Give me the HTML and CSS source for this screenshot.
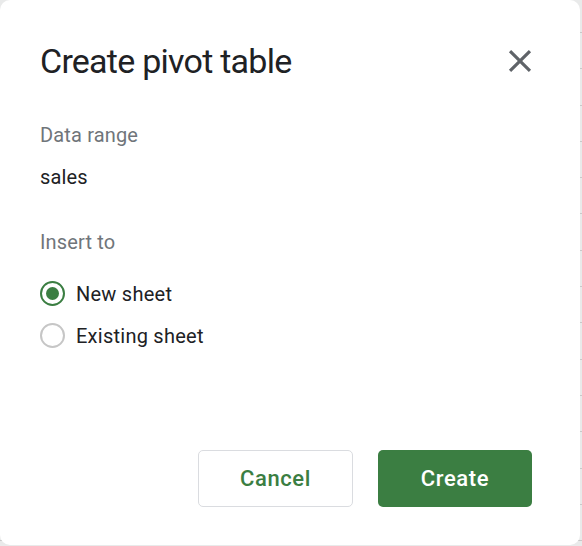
FILE: index.html
```html
<!DOCTYPE html>
<html>
<head>
<meta charset="utf-8">
<link rel="stylesheet" href="styles.css">
</head>
<body>
<div class="dialog">
  <div class="header">
    <h1 class="title">Create pivot table</h1>
    <button class="close" aria-label="Close">
      <svg width="38" height="38" viewBox="0 0 24 24"><path fill="#5f6368" d="M19 6.41L17.59 5 12 10.59 6.41 5 5 6.41 10.59 12 5 17.59 6.41 19 12 13.41 17.59 19 19 17.59 13.41 12z"/></svg>
    </button>
  </div>
  <div class="label first">Data range</div>
  <div class="value">sales</div>
  <div class="label second">Insert to</div>
  <div class="options">
    <label class="option"><span class="radio checked"></span><span>New sheet</span></label>
    <label class="option"><span class="radio"></span><span>Existing sheet</span></label>
  </div>
  <div class="actions">
    <button class="btn cancel">Cancel</button>
    <button class="btn create">Create</button>
  </div>
</div>
</body>
</html>
```
FILE: styles.css
```css
html, body {
  margin: 0;
  padding: 0;
}
body {
  width: 582px;
  height: 546px;
  background-color: #e9eaea;
  background-image: repeating-linear-gradient(to bottom, transparent 0, transparent 32px, #c9c9c9 32px, #c9c9c9 33px, transparent 33px, transparent 36.3px);
  font-family: Roboto, "Liberation Sans", sans-serif;
  overflow: hidden;
}
.dialog {
  box-sizing: border-box;
  width: 580px;
  height: 545px;
  background: #fff;
  border-radius: 10px;
  padding: 41px 48px 38px 40px;
  display: flex;
  flex-direction: column;
}
.header {
  display: flex;
  align-items: center;
  justify-content: space-between;
  height: 40px;
}
.title {
  margin: 0;
  font-size: 34px;
  line-height: 40px;
  font-weight: 400;
  color: #202124;
  letter-spacing: -0.75px;
}
.close {
  border: 0;
  background: none;
  padding: 0;
  width: 38px;
  height: 38px;
  margin-right: -7px;
  display: flex;
}
.label {
  font-size: 20px;
  line-height: 24px;
  color: #70757a;
  letter-spacing: 0.15px;
}
.label.first { margin-top: 42px; }
.label.second { margin-top: 41px; }
.value {
  margin-top: 18px;
  font-size: 20px;
  line-height: 24px;
  color: #202124;
  letter-spacing: 0.15px;
}
.options {
  margin-top: 27px;
  display: flex;
  flex-direction: column;
  gap: 17px;
}
.option {
  display: flex;
  align-items: center;
  gap: 11px;
  height: 25px;
  font-size: 20px;
  line-height: 24px;
  color: #202124;
  letter-spacing: 0.25px;
}
.radio {
  box-sizing: border-box;
  width: 25px;
  height: 25px;
  border-radius: 50%;
  border: 2px solid #c6c6c6;
  display: flex;
  align-items: center;
  justify-content: center;
}
.radio.checked {
  border-color: #3b7e42;
}
.radio.checked::after {
  content: "";
  width: 13px;
  height: 13px;
  border-radius: 50%;
  background: #3b7e42;
}
.actions {
  margin-top: auto;
  display: flex;
  justify-content: flex-end;
  gap: 25px;
}
.btn {
  box-sizing: border-box;
  width: 155px;
  height: 57px;
  border-radius: 5px;
  font-family: Roboto, "Liberation Sans", sans-serif;
  font-size: 22px;
  font-weight: 500;
  letter-spacing: 0.6px;
  cursor: pointer;
}
.cancel {
  background: #fff;
  border: 1px solid #dadce0;
  color: #3b7e42;
}
.create {
  width: 154px;
  background: #3b7e42;
  border: 0;
  color: #fff;
}
```
